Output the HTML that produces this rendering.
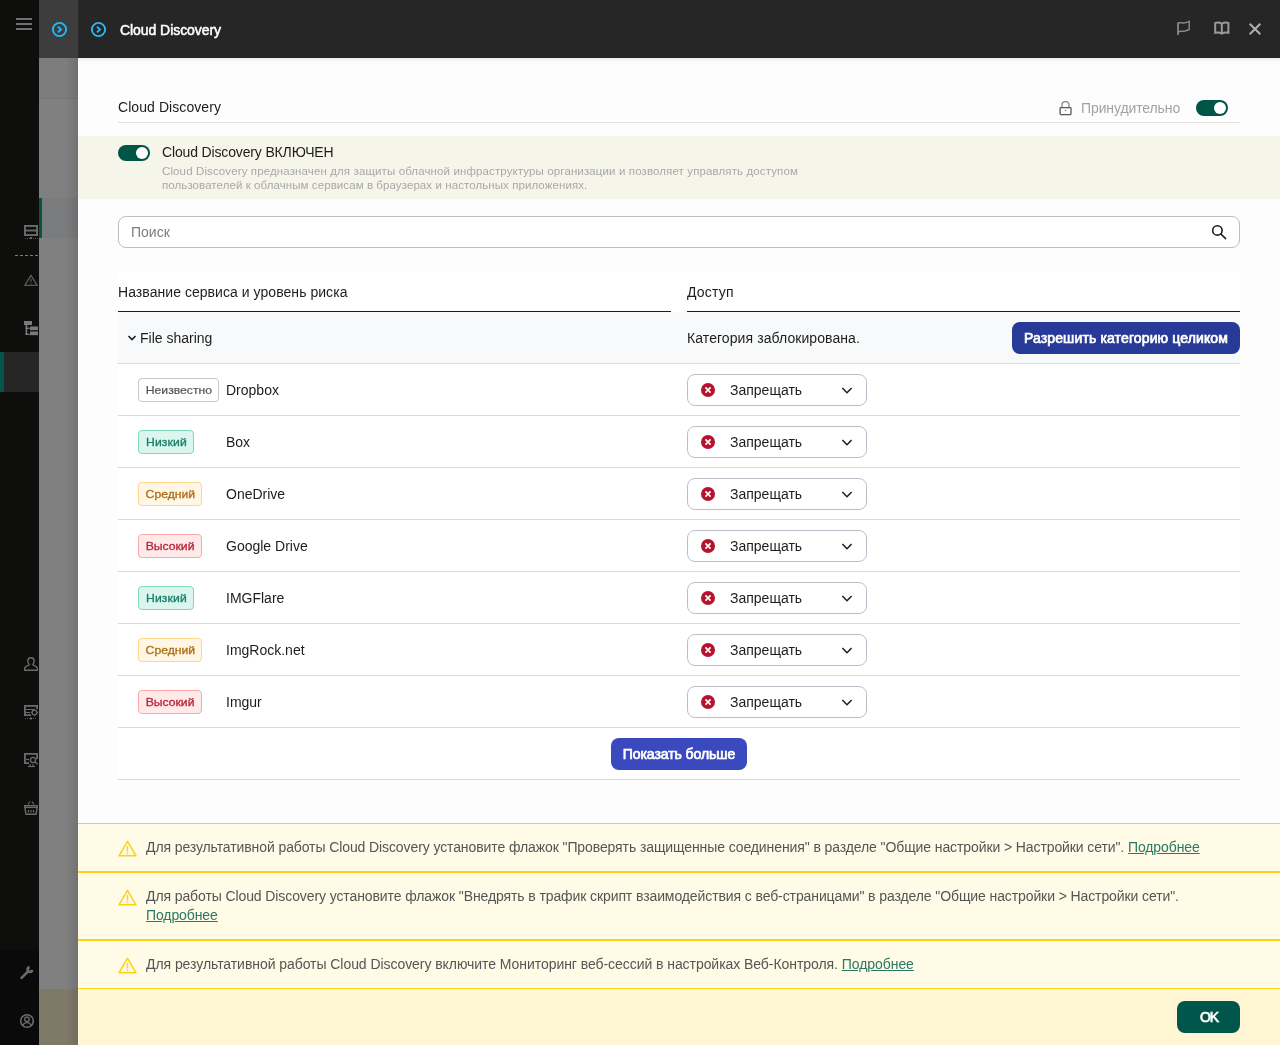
<!DOCTYPE html>
<html lang="ru">
<head>
<meta charset="utf-8">
<title>Cloud Discovery</title>
<style>
*{box-sizing:border-box;margin:0;padding:0}
body{will-change:transform}html,body{width:1280px;height:1045px;overflow:hidden;background:#7f7f7f;font-family:"Liberation Sans",sans-serif;color:#1d1d1b;font-size:14px}
.abs{position:absolute}
.t{position:absolute;white-space:nowrap;line-height:20px}
#side{position:absolute;left:0;top:0;width:39px;height:1045px;background:#0e0e0c}
#side2{position:absolute;left:39px;top:0;width:39px;height:1045px;background:#808080}
#side2 .grad{position:absolute;left:27px;top:58px;width:12px;height:987px;background:linear-gradient(90deg,rgba(0,0,0,0),rgba(0,0,0,0.11))}
#side2 .up{position:absolute;left:0;top:58px;width:39px;height:40px;background:#7d7d7d}
#side2 .top{position:absolute;left:0;top:0;width:39px;height:58px;background:#3d3d3d}
#side2 .ln{position:absolute;left:0;top:98px;width:39px;height:1px;background:#777}
#side2 .sel{position:absolute;left:0;top:198px;width:39px;height:40px;background:#7a7b7d}
#side2 .selbar{position:absolute;left:0;top:198px;width:3px;height:40px;background:#0a5246}
#side2 .bot{position:absolute;left:0;top:989px;width:39px;height:56px;background:#7f7a68}
#side .act{position:absolute;left:0;top:352px;width:39px;height:40px;background:#262626}
#side .actbar{position:absolute;left:0;top:352px;width:4px;height:40px;background:#00574a}
#side .bt{position:absolute;left:0;top:949px;width:39px;height:96px;background:#0a0a0a}
#side .dash{position:absolute;left:15px;top:255px;width:24px;height:1px;background:repeating-linear-gradient(90deg,#7c7c7c 0,#7c7c7c 3px,transparent 3px,transparent 5px)}
#hdr{position:absolute;left:78px;top:0;width:1202px;height:58px;background:#262626}
#panel{position:absolute;left:78px;top:58px;width:1202px;height:987px;background:#fdfdfd}
#shadow{position:absolute;left:78px;top:58px;width:1202px;height:6px;background:linear-gradient(#ececec,#f8f8f8 50%,#fdfdfd)}
.tog{position:absolute;width:32px;height:16px;border-radius:8px;background:#005548}
.tog:after{content:"";position:absolute;right:2px;top:2px;width:12px;height:12px;border-radius:6px;background:#fff}
.row{position:absolute;left:118px;width:1122px;height:52px;border-bottom:1px solid #d5dbe3;background:#fff}
.bdg{position:absolute;left:20px;top:14px;height:24px;border:1px solid;border-radius:4px;font-size:11px;line-height:22px;padding:0;text-align:center;white-space:nowrap;font-weight:bold}
.bdg i{display:inline-block;font-style:normal;transform:scaleX(1.107);font-weight:normal;-webkit-text-stroke:0.3px}
.b0 i{-webkit-text-stroke:0.2px}
.b0{border-color:#c3c9d3;background:#fff;color:#555;width:81px}
.b1{border-color:#7dd6c0;background:#daf6ef;color:#17806a;width:56px;letter-spacing:0.1px}
.b2{border-color:#ffd589;background:#fff6e5;color:#ad6f14;width:64px}
.b3{border-color:#ffa6a6;background:#ffe9e9;color:#b7263b;width:64px}
.nm{position:absolute;left:108px;top:16px;line-height:20px;white-space:nowrap}
.selct{position:absolute;left:569px;top:10px;width:180px;height:32px;border:1px solid #b9bfc9;border-radius:8px;background:#fff}
.selct .x{position:absolute;left:13px;top:8px;width:14px;height:14px}
.selct .l{position:absolute;left:42px;top:5px;line-height:20px;white-space:nowrap}
.selct .c{position:absolute;left:153px;top:11.700px;width:12px;height:8px}
.warn{position:absolute;left:78px;width:1202px;background:#fffbe6;border-top:1px solid #ffcf1a;border-bottom:1px solid #ffcf1a;color:#555;line-height:19px}
.warn svg{position:absolute;left:40px;top:16px}
.warn .tx{position:absolute;left:68px;top:14px;white-space:nowrap;letter-spacing:-0.1px}
.warn a{color:#2a7866;text-decoration:underline}
.btn{position:absolute;height:32px;border-radius:8px;color:#fff;-webkit-text-stroke:0.7px #fff;text-align:center;line-height:32px;white-space:nowrap}
</style>
</head>
<body>
<div id="side"><div class="act"></div><div class="actbar"></div><div class="bt"></div><div class="dash"></div>
<svg class="abs" style="left:0;top:0" width="39" height="1045" viewBox="0 0 39 1045" fill="none" stroke="#6b6b6b" stroke-width="1.4">
<g stroke-width="1.900"><rect x="24.950" y="225.950" width="12.100" height="9.100"/><path d="M25 230.500H37" /><path d="M25 238.5H38" stroke-dasharray="1 1" stroke-width="1" stroke="#555"/><rect x="30" y="237" width="2" height="2" fill="#666" stroke="none"/></g>
<g stroke="#585858"><path d="M31 275.3 L37.2 285.4 H24.8 Z" stroke-linejoin="round"/><path d="M31 279v3.2M31 283.2v1" stroke-width="1.2"/></g>
<g fill="#7a7a7a" stroke="none"><rect x="24" y="321" width="8" height="4"/><rect x="30" y="326.5" width="8" height="3.7"/><rect x="30" y="331.5" width="8" height="3.7"/><rect x="25.6" y="325" width="1.6" height="10"/><rect x="25.6" y="327.6" width="4" height="1.4"/><rect x="25.6" y="333.6" width="4" height="1.4"/></g>
<g><path d="M31 657.7c-2 0-3.2 1.5-3.2 3.4 0 1.5 0.6 2.8 1.6 3.6 -1.6 1 -4.7 2.2 -4.7 3.6v2h12.6v-2c0-1.4-3.1-2.6-4.7-3.6 1-0.8 1.6-2.1 1.6-3.6 0-1.9-1.2-3.4-3.2-3.4z" stroke-linejoin="round"/></g>
<g><path d="M37.100 709V705.900H24.900v9.200H31" stroke-width="1.800"/><path d="M26 709.5H34M26 712.5H30" stroke-width="1.2"/><circle cx="34.5" cy="712.5" r="2.4" stroke-width="1.3"/><path d="M34.5 708.8v1M34.5 715.2v1M30.8 712.5h1M37.2 712.5h1" stroke-width="1.2"/><path d="M25 718.5H37" stroke-dasharray="1 1" stroke-width="1" stroke="#555"/><rect x="30" y="717.5" width="2" height="2" fill="#666" stroke="none"/></g>
<g><path d="M37.100 759V753.900H24.900v9.200H29" stroke-width="1.800"/><path d="M26 759.5H29" stroke-width="1.2"/><circle cx="33" cy="760" r="2.6" stroke-width="1.4"/><path d="M35 762l2.5 2.3" stroke-width="1.4"/><path d="M28 766.5h7" stroke-width="1.2"/><path d="M30 764v2M33 764v2" stroke-width="1"/></g>
<g><path d="M24.5 805.7h13l-1.5 8.6h-10z" stroke-linejoin="round"/><path d="M25 807.5h12" stroke-width="1.2"/><path d="M28 804.5l2-3M34 804.5l-2-3" stroke-width="1.1"/><path d="M28.5 810v2.5M31 810v2.5M33.500 810v2.5" stroke-width="1.2"/></g>
<g stroke="#6b6b6b"><path d="M20.800 978.600L28.300 971.200" stroke-width="2.500"/><path d="M31.99 969.79A2.2 2.2 0 1 1 29.61 967.41" stroke-width="2.700"/></g>
<g stroke-width="1.600"><circle cx="27" cy="1021" r="6.300"/><circle cx="27" cy="1019.3" r="2.3" stroke-width="1.3"/><path d="M22.800 1025.500c1-2 2.500-2.800 4.200-2.800s3.200 0.800 4.200 2.800" stroke-width="1.3"/></g>
</svg>

<div class="abs" style="left:16px;top:18px;width:16px;height:2px;background:#6f6f6f"></div>
<div class="abs" style="left:16px;top:23px;width:16px;height:2px;background:#6f6f6f"></div>
<div class="abs" style="left:16px;top:28px;width:16px;height:2px;background:#6f6f6f"></div>
</div>
<div id="side2"><div class="top"></div><div class="up"></div><div class="ln"></div><div class="sel"></div><div class="selbar"></div><div class="bot"></div><div class="grad"></div>
<svg class="abs" style="left:12px;top:21px" width="17" height="17" viewBox="0 0 17 17"><circle cx="8.500" cy="8.500" r="6.600" fill="none" stroke="#29b6f6" stroke-width="1.900"/><path d="M6.900 5.600L10 8.500L6.900 11.400" fill="none" stroke="#29b6f6" stroke-width="1.900"/></svg>
</div>
<div id="hdr">
<svg class="abs" style="left:12px;top:21px" width="17" height="17" viewBox="0 0 17 17"><circle cx="8.500" cy="8.500" r="6.600" fill="none" stroke="#29b6f6" stroke-width="1.900"/><path d="M6.900 5.600L10 8.500L6.900 11.400" fill="none" stroke="#29b6f6" stroke-width="1.900"/></svg>

<svg class="abs" style="left:1092px;top:14px" width="100" height="30" viewBox="1170 14 100 30" fill="none">
<path d="M1178 22.500V35" stroke="#8a8a8a" stroke-width="1.8"/><path d="M1178 23.200c2.500-1.400 4.500 0.300 7 -0.300c1.500-0.400 2.800-1 4.200-1.600v8.200c-1.400 0.600-2.700 1.200-4.200 1.600c-2.500 0.600-4.500-0.500-7 0.900" stroke="#8a8a8a" stroke-width="1.4"/>
<path d="M1215.200 32.800V23c2.200-0.700 4.600-0.500 6.600 0.800c2-1.300 4.400-1.500 6.600-0.800v9.800c-2.200-0.600-4.600-0.400-6.600 0.800c-2-1.200-4.400-1.400-6.600-0.800zM1221.800 23.800v9.600" stroke="#9a9a9a" stroke-width="2"/>
<path d="M1249.700 23.700L1260.300 34.300M1260.300 23.700L1249.700 34.300" stroke="#adadad" stroke-width="2.100"/>
</svg>
<div class="t" id="ht" style="left:42px;top:20px;font-size:14px;color:#fff;letter-spacing:-0.06px;-webkit-text-stroke:0.5px #fff">Cloud Discovery</div>
</div>
<div id="panel"></div>
<div id="shadow"></div>

<div class="t" id="t1" style="left:118px;top:97px;font-size:14px;letter-spacing:0.07px">Cloud Discovery</div>
<div class="abs" style="left:118px;top:122px;width:1122px;height:1px;background:#e1e1e1"></div>
<svg class="abs" style="left:1056px;top:98px" width="20" height="20" viewBox="1056 98 20 20" fill="none"><path d="M1062 107.500v-2.500c0-2 1.400-3.400 3.500-3.400s3.500 1.400 3.500 3.400v2.500" stroke="#8a8a8a" stroke-width="1.3"/><rect x="1060.100" y="107.600" width="10.900" height="7" rx="0.800" stroke="#5a5a5a" stroke-width="1.300"/><circle cx="1065.500" cy="110.600" r="0.700" fill="#5a5a5a"/></svg>
<div class="t" id="t2" style="left:1081px;top:98px;color:#a3a3a3;letter-spacing:-0.11px">Принудительно</div>
<div class="tog" style="left:1196px;top:100px"></div>

<div class="abs" style="left:78px;top:136px;width:1202px;height:63px;background:#f6f5ea"></div>
<div class="tog" style="left:118px;top:145px"></div>
<div class="t" id="t3" style="left:162px;top:142px;letter-spacing:-0.15px">Cloud Discovery ВКЛЮЧЕН</div>
<div class="t" id="t4" style="left:162px;top:164px;font-size:11.5px;line-height:14px;color:#a8a8a8;letter-spacing:0.12px">Cloud Discovery предназначен для защиты облачной инфраструктуры организации и позволяет управлять доступом</div>
<div class="t" id="t5" style="left:162px;top:178px;font-size:11.5px;line-height:14px;color:#a8a8a8;letter-spacing:0.08px">пользователей к облачным сервисам в браузерах и настольных приложениях.</div>

<div class="abs" style="left:118px;top:216px;width:1122px;height:32px;border:1px solid #b9bfc9;border-radius:8px;background:#fff"></div>
<svg class="abs" style="left:1208px;top:220px" width="24" height="24" viewBox="1208 220 24 24" fill="none" stroke="#1d1d1b" stroke-width="1.600"><circle cx="1217.400" cy="230.400" r="4.700"/><path d="M1220.700 233.800L1225.600 238.600" stroke-linecap="round"/></svg>
<div class="t" id="t6" style="left:131px;top:222px;color:#7c7c7c">Поиск</div>

<div class="abs" style="left:118px;top:272px;width:1122px;height:40px;background:#fff"></div>
<div class="t" id="t7" style="left:118px;top:282px;letter-spacing:0.05px">Название сервиса и уровень риска</div>
<div class="t" id="t8" style="left:687px;top:282px;letter-spacing:0.2px">Доступ</div>
<div class="abs" style="left:118px;top:311px;width:553px;height:1px;background:#1d1d1b"></div>
<div class="abs" style="left:687px;top:311px;width:553px;height:1px;background:#1d1d1b"></div>

<div class="row" style="top:312px;background:#f8f9fb">
<svg class="abs" style="left:8px;top:20px" width="12" height="12" viewBox="126 332 12 12" fill="none" stroke="#1d1d1b" stroke-width="1.600"><path d="M128.500 336L132 339.500L135.500 336"/></svg><div class="t" id="t9" style="left:22px;top:16px">File sharing</div>
<div class="t" id="t10" style="left:569px;top:16px;letter-spacing:0.08px">Категория заблокирована.</div>
<div class="btn" id="b1" style="left:894px;top:10px;width:228px;background:#283a97;letter-spacing:0.13px">Разрешить категорию целиком</div>
</div>

<div class="row" style="top:364px"><span class="bdg b0"><i>Неизвестно</i></span><span class="nm">Dropbox</span><div class="selct"><svg class="x" viewBox="0 0 14 14"><circle cx="7" cy="7" r="7" fill="#b5132e"/><path d="M4.400 4.400L9.600 9.600M9.600 4.400L4.400 9.600" stroke="#fff" stroke-width="1.700"/></svg><svg class="c" viewBox="0 0 12 8" fill="none" stroke="#1d1d1b" stroke-width="1.500"><path d="M1.400 0.900L6 5.700L10.600 0.900"/></svg><span class="l">Запрещать</span></div></div>
<div class="row" style="top:416px"><span class="bdg b1"><i>Низкий</i></span><span class="nm">Box</span><div class="selct"><svg class="x" viewBox="0 0 14 14"><circle cx="7" cy="7" r="7" fill="#b5132e"/><path d="M4.400 4.400L9.600 9.600M9.600 4.400L4.400 9.600" stroke="#fff" stroke-width="1.700"/></svg><svg class="c" viewBox="0 0 12 8" fill="none" stroke="#1d1d1b" stroke-width="1.500"><path d="M1.400 0.900L6 5.700L10.600 0.900"/></svg><span class="l">Запрещать</span></div></div>
<div class="row" style="top:468px"><span class="bdg b2"><i>Средний</i></span><span class="nm">OneDrive</span><div class="selct"><svg class="x" viewBox="0 0 14 14"><circle cx="7" cy="7" r="7" fill="#b5132e"/><path d="M4.400 4.400L9.600 9.600M9.600 4.400L4.400 9.600" stroke="#fff" stroke-width="1.700"/></svg><svg class="c" viewBox="0 0 12 8" fill="none" stroke="#1d1d1b" stroke-width="1.500"><path d="M1.400 0.900L6 5.700L10.600 0.900"/></svg><span class="l">Запрещать</span></div></div>
<div class="row" style="top:520px"><span class="bdg b3"><i>Высокий</i></span><span class="nm">Google Drive</span><div class="selct"><svg class="x" viewBox="0 0 14 14"><circle cx="7" cy="7" r="7" fill="#b5132e"/><path d="M4.400 4.400L9.600 9.600M9.600 4.400L4.400 9.600" stroke="#fff" stroke-width="1.700"/></svg><svg class="c" viewBox="0 0 12 8" fill="none" stroke="#1d1d1b" stroke-width="1.500"><path d="M1.400 0.900L6 5.700L10.600 0.900"/></svg><span class="l">Запрещать</span></div></div>
<div class="row" style="top:572px"><span class="bdg b1"><i>Низкий</i></span><span class="nm">IMGFlare</span><div class="selct"><svg class="x" viewBox="0 0 14 14"><circle cx="7" cy="7" r="7" fill="#b5132e"/><path d="M4.400 4.400L9.600 9.600M9.600 4.400L4.400 9.600" stroke="#fff" stroke-width="1.700"/></svg><svg class="c" viewBox="0 0 12 8" fill="none" stroke="#1d1d1b" stroke-width="1.500"><path d="M1.400 0.900L6 5.700L10.600 0.900"/></svg><span class="l">Запрещать</span></div></div>
<div class="row" style="top:624px"><span class="bdg b2"><i>Средний</i></span><span class="nm">ImgRock.net</span><div class="selct"><svg class="x" viewBox="0 0 14 14"><circle cx="7" cy="7" r="7" fill="#b5132e"/><path d="M4.400 4.400L9.600 9.600M9.600 4.400L4.400 9.600" stroke="#fff" stroke-width="1.700"/></svg><svg class="c" viewBox="0 0 12 8" fill="none" stroke="#1d1d1b" stroke-width="1.500"><path d="M1.400 0.900L6 5.700L10.600 0.900"/></svg><span class="l">Запрещать</span></div></div>
<div class="row" style="top:676px"><span class="bdg b3"><i>Высокий</i></span><span class="nm">Imgur</span><div class="selct"><svg class="x" viewBox="0 0 14 14"><circle cx="7" cy="7" r="7" fill="#b5132e"/><path d="M4.400 4.400L9.600 9.600M9.600 4.400L4.400 9.600" stroke="#fff" stroke-width="1.700"/></svg><svg class="c" viewBox="0 0 12 8" fill="none" stroke="#1d1d1b" stroke-width="1.500"><path d="M1.400 0.900L6 5.700L10.600 0.900"/></svg><span class="l">Запрещать</span></div></div>
<div class="row" style="top:728px"><div class="btn" id="b2" style="left:493px;top:10px;width:136px;background:#3a49bd;letter-spacing:-0.06px">Показать больше</div></div>

<div class="warn" style="top:823px;height:49px"><svg width="19" height="17" viewBox="0 0 19 17" fill="none" stroke="#ffcf1a"><path d="M9.500 1.300L18 15.800H1Z" stroke-width="1.500" stroke-linejoin="round"/><path d="M9.500 6v5.500M9.500 12.600v1.600" stroke-width="1.400"/></svg><div class="tx" id="w1">Для результативной работы Cloud Discovery установите флажок "Проверять защищенные соединения" в разделе "Общие настройки &gt; Настройки сети". <a>Подробнее</a></div></div>
<div class="warn" style="top:872px;height:68px"><svg width="19" height="17" viewBox="0 0 19 17" fill="none" stroke="#ffcf1a"><path d="M9.500 1.300L18 15.800H1Z" stroke-width="1.500" stroke-linejoin="round"/><path d="M9.500 6v5.500M9.500 12.600v1.600" stroke-width="1.400"/></svg><div class="tx" id="w2">Для работы Cloud Discovery установите флажок "Внедрять в трафик скрипт взаимодействия с веб-страницами" в разделе "Общие настройки &gt; Настройки сети".<br><a>Подробнее</a></div></div>
<div class="warn" style="top:940px;height:49px"><svg width="19" height="17" viewBox="0 0 19 17" fill="none" stroke="#ffcf1a"><path d="M9.500 1.300L18 15.800H1Z" stroke-width="1.500" stroke-linejoin="round"/><path d="M9.500 6v5.500M9.500 12.600v1.600" stroke-width="1.400"/></svg><div class="tx" id="w3" style="letter-spacing:-0.057px">Для результативной работы Cloud Discovery включите Мониторинг веб-сессий в настройках Веб-Контроля. <a>Подробнее</a></div></div>
<div class="abs" style="left:78px;top:989px;width:1202px;height:56px;background:#fff6d4"></div>
<div class="btn" id="b3" style="left:1177px;top:1001px;width:63px;background:#00564a;letter-spacing:-1px;padding-left:1px">OK</div>
</body>
</html>
